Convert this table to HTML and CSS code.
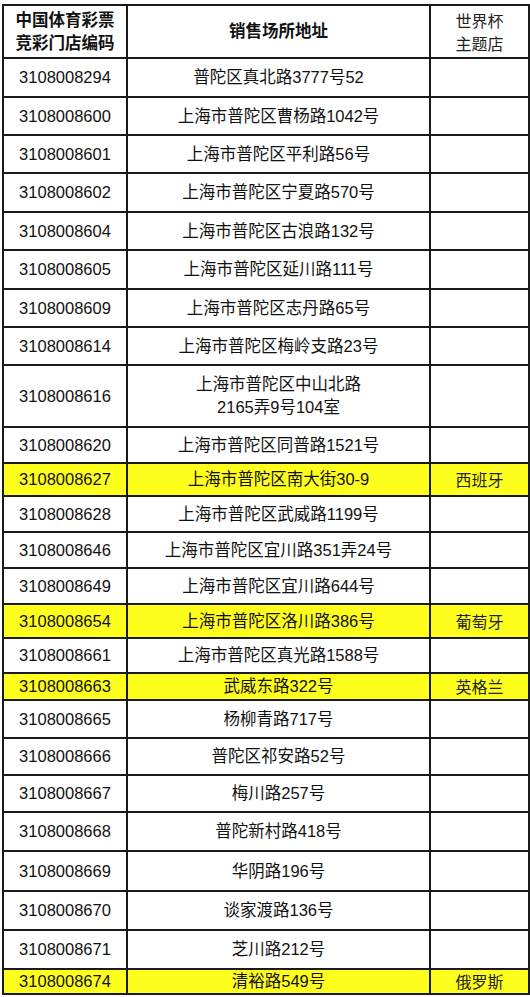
FILE: index.html
```html
<!DOCTYPE html>
<html lang="zh-CN">
<head>
<meta charset="utf-8">
<title>竞彩门店</title>
<link rel="stylesheet" href="styles.css">
</head>
<body>
<div class="sheet" role="table">
  <div class="row head h53" role="row">
    <div class="cell code" role="columnheader">中国体育彩票<br>竞彩门店编码</div>
    <div class="cell addr" role="columnheader">销售场所地址</div>
    <div class="cell cup" role="columnheader">世界杯<br>主题店</div>
  </div>
  <div class="row h39" role="row"><div class="cell code">3108008294</div><div class="cell addr">普陀区真北路3777号52</div><div class="cell cup"></div></div>
  <div class="row h38" role="row"><div class="cell code">3108008600</div><div class="cell addr">上海市普陀区曹杨路1042号</div><div class="cell cup"></div></div>
  <div class="row h38" role="row"><div class="cell code">3108008601</div><div class="cell addr">上海市普陀区平利路56号</div><div class="cell cup"></div></div>
  <div class="row h39" role="row"><div class="cell code">3108008602</div><div class="cell addr">上海市普陀区宁夏路570号</div><div class="cell cup"></div></div>
  <div class="row h38" role="row"><div class="cell code">3108008604</div><div class="cell addr">上海市普陀区古浪路132号</div><div class="cell cup"></div></div>
  <div class="row h39" role="row"><div class="cell code">3108008605</div><div class="cell addr">上海市普陀区延川路111号</div><div class="cell cup"></div></div>
  <div class="row h38" role="row"><div class="cell code">3108008609</div><div class="cell addr">上海市普陀区志丹路65号</div><div class="cell cup"></div></div>
  <div class="row h38" role="row"><div class="cell code">3108008614</div><div class="cell addr">上海市普陀区梅岭支路23号</div><div class="cell cup"></div></div>
  <div class="row h62" role="row"><div class="cell code">3108008616</div><div class="cell addr">上海市普陀区中山北路<br>2165弄9号104室</div><div class="cell cup"></div></div>
  <div class="row h36" role="row"><div class="cell code">3108008620</div><div class="cell addr">上海市普陀区同普路1521号</div><div class="cell cup"></div></div>
  <div class="row h33 hl" role="row"><div class="cell code">3108008627</div><div class="cell addr">上海市普陀区南大街30-9</div><div class="cell cup">西班牙</div></div>
  <div class="row h36" role="row"><div class="cell code">3108008628</div><div class="cell addr">上海市普陀区武威路1199号</div><div class="cell cup"></div></div>
  <div class="row h36" role="row"><div class="cell code">3108008646</div><div class="cell addr">上海市普陀区宜川路351弄24号</div><div class="cell cup"></div></div>
  <div class="row h36" role="row"><div class="cell code">3108008649</div><div class="cell addr">上海市普陀区宜川路644号</div><div class="cell cup"></div></div>
  <div class="row h34 hl" role="row"><div class="cell code">3108008654</div><div class="cell addr">上海市普陀区洛川路386号</div><div class="cell cup">葡萄牙</div></div>
  <div class="row h35" role="row"><div class="cell code">3108008661</div><div class="cell addr">上海市普陀区真光路1588号</div><div class="cell cup"></div></div>
  <div class="row h27 hl" role="row"><div class="cell code">3108008663</div><div class="cell addr">武威东路322号</div><div class="cell cup">英格兰</div></div>
  <div class="row h38" role="row"><div class="cell code">3108008665</div><div class="cell addr">杨柳青路717号</div><div class="cell cup"></div></div>
  <div class="row h37" role="row"><div class="cell code">3108008666</div><div class="cell addr">普陀区祁安路52号</div><div class="cell cup"></div></div>
  <div class="row h37" role="row"><div class="cell code">3108008667</div><div class="cell addr">梅川路257号</div><div class="cell cup"></div></div>
  <div class="row h39" role="row"><div class="cell code">3108008668</div><div class="cell addr">普陀新村路418号</div><div class="cell cup"></div></div>
  <div class="row h40" role="row"><div class="cell code">3108008669</div><div class="cell addr">华阴路196号</div><div class="cell cup"></div></div>
  <div class="row h39" role="row"><div class="cell code">3108008670</div><div class="cell addr">谈家渡路136号</div><div class="cell cup"></div></div>
  <div class="row h39" role="row"><div class="cell code">3108008671</div><div class="cell addr">芝川路212号</div><div class="cell cup"></div></div>
  <div class="row h25 hl" role="row"><div class="cell code">3108008674</div><div class="cell addr">清裕路549号</div><div class="cell cup">俄罗斯</div></div>
</div>
</body>
</html>
```
FILE: styles.css
```css
html, body {
  margin: 0;
  padding: 0;
  background: #ffffff;
}

.sheet {
  margin: 4px 0 0 2px;
  width: 528px;
  box-sizing: border-box;
  border-top: 2px solid #1a1a1a;
  border-left: 2px solid #1a1a1a;
  font-family: "Liberation Sans", "Noto Sans CJK SC", sans-serif;
  font-size: 16.5px;
  color: #111111;
}

.row {
  display: flex;
  box-sizing: border-box;
  border-bottom: 2px solid #1a1a1a;
}

.cell {
  display: flex;
  align-items: center;
  justify-content: center;
  box-sizing: border-box;
  border-right: 2px solid #1a1a1a;
  text-align: center;
  white-space: nowrap;
  line-height: 23px;
}

.code { width: 124px; }
.addr { width: 303px; }
.cup  {
  width: 99px;
  font-family: "Noto Sans CJK SC", serif;
  font-size: 16px;
  color: #222222;
}

.head .code,
.head .addr {
  font-weight: 700;
}

.head .code {
  padding-top: 1px;
}

.hl {
  background: #ffff1e;
}

.h25 { height: 25px; }
.h27 { height: 27px; }
.h33 { height: 33px; }
.h34 { height: 34px; }
.h35 { height: 35px; }
.h36 { height: 36px; }
.h37 { height: 37px; }
.h38 { height: 38px; }
.h39 { height: 39px; }
.h40 { height: 40px; }
.h53 { height: 53px; }
.h62 { height: 62px; }
```
